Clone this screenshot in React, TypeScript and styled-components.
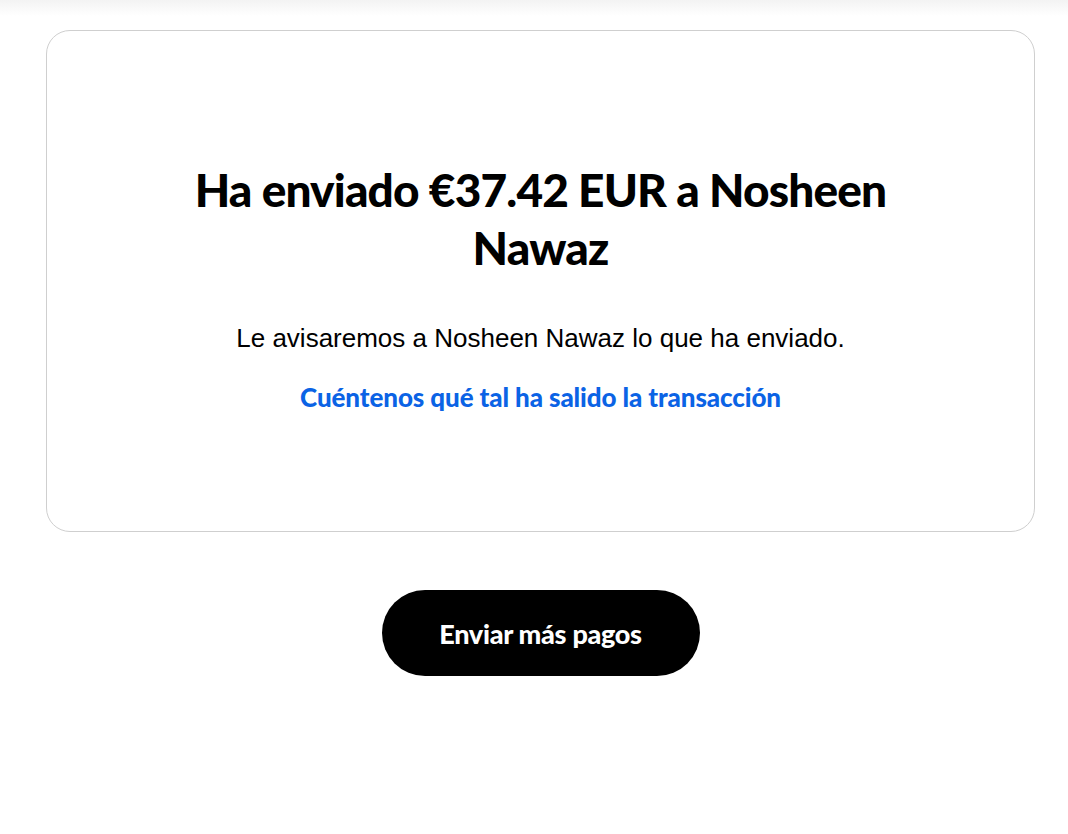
import React from "react";
import styled, { createGlobalStyle } from "styled-components";

const Global = createGlobalStyle`
  html, body { margin: 0; padding: 0; background: #fff; }
  body { font-family: "Liberation Sans", Arial, sans-serif; color: #000; }
`;

const Page = styled.div`
  position: relative;
  min-height: 834px;
  padding: 30px 32px 0 46px;
  box-sizing: border-box;
  display: flex;
  flex-direction: column;
  align-items: stretch;
`;

const TopShade = styled.div`
  position: absolute;
  left: 0;
  right: 0;
  top: 0;
  height: 16px;
  background: linear-gradient(to bottom, #f3f3f3, rgba(255,255,255,0));
  pointer-events: none;
`;

const Card = styled.section`
  width: 989px;
  height: 502px;
  box-sizing: border-box;
  border: 1px solid #cfcfcf;
  border-radius: 24px;
  display: flex;
  flex-direction: column;
  align-items: center;
  padding-top: 130px;
`;

const Heading = styled.h1`
  margin: 0;
  max-width: 740px;
  text-align: center;
  font-family: Lato, "Open Sans", sans-serif;
  font-weight: 900;
  font-size: 46px;
  line-height: 58px;
  letter-spacing: -0.85px;
`;

const Note = styled.p`
  margin: 46px 0 0;
  font-family: "Liberation Sans", Arial, sans-serif;
  font-size: 26px;
  line-height: 30px;
`;

const Link = styled.a`
  margin-top: 28px;
  color: #0b63e5;
  text-decoration: none;
  font-family: Lato, "Open Sans", sans-serif;
  font-weight: 900;
  font-size: 26px;
  line-height: 32px;
  letter-spacing: -0.1px;
`;

const Actions = styled.div`
  width: 989px;
  display: flex;
  justify-content: center;
  margin-top: 58px;
`;

const Button = styled.button`
  width: 318px;
  height: 86px;
  border: none;
  border-radius: 43px;
  background: #000;
  color: #fff;
  font-family: Lato, "Open Sans", sans-serif;
  font-weight: 900;
  font-size: 27px;
  letter-spacing: -0.3px;
  cursor: pointer;
`;

export default function App() {
  return (
    <>
      <Global />
      <Page>
        <TopShade />
        <Card>
          <Heading>Ha enviado €37.42 EUR a Nosheen Nawaz</Heading>
          <Note>Le avisaremos a Nosheen Nawaz lo que ha enviado.</Note>
          <Link href="#">Cuéntenos qué tal ha salido la transacción</Link>
        </Card>
        <Actions>
          <Button>Enviar más pagos</Button>
        </Actions>
      </Page>
    </>
  );
}
